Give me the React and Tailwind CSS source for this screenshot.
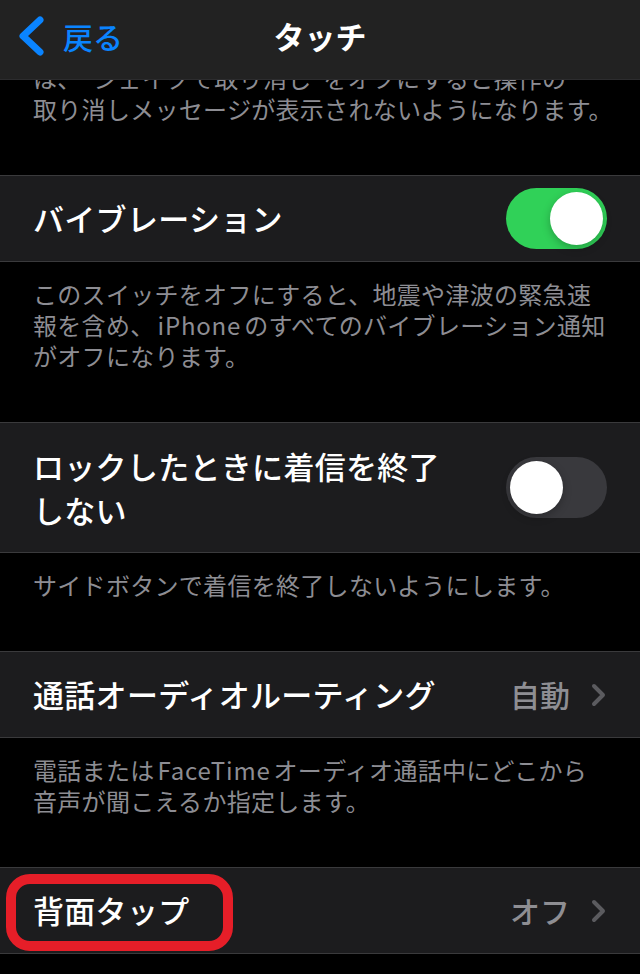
import React from 'react';

const font = { fontFamily: '"Noto Sans CJK JP", "Noto Sans", sans-serif' };

function Toggle({ on }) {
  return (
    <div
      className={`relative flex h-[61px] w-[101px] shrink-0 items-center rounded-full px-[4px] ${
        on ? 'justify-end bg-[#30d158]' : 'justify-start bg-[#39393d]'
      }`}
    >
      <div className="h-[53px] w-[53px] rounded-full bg-white shadow-[0_3px_8px_rgba(0,0,0,0.25)]" />
    </div>
  );
}

function Chevron() {
  return (
    <svg width="17" height="24" viewBox="0 0 17 24" className="shrink-0">
      <path d="M4 3 L13 12 L4 21" fill="none" stroke="#5b5b5f" strokeWidth="4" strokeLinecap="round" strokeLinejoin="round" />
    </svg>
  );
}

function Latin({ children }) {
  return <span className="mx-[3px] tracking-[0.8px]">{children}</span>;
}

function Footer({ children, top }) {
  return (
    <div
      className={`whitespace-nowrap px-[33px] pb-[51px] text-[24px] leading-[31px] tracking-[0.3px] text-[#8d8d93] ${top ? 'pt-[62px]' : 'pt-[16px]'}`}
    >
      {children}
    </div>
  );
}

function Cell({ children, tall }) {
  return (
    <div
      className={`relative flex items-center justify-between border-y border-[#3a3a3c] bg-[#1c1c1e] pl-[33px] pr-[33px] ${
        tall ? 'h-[131px]' : 'h-[87px]'
      }`}
    >
      {children}
    </div>
  );
}

export default function App() {
  return (
    <div className="relative h-[974px] w-[640px] overflow-hidden bg-black" style={font}>
      <header className="absolute left-0 right-0 top-0 z-10 flex h-[80px] items-center justify-center border-b border-[#2c2c2e] bg-[#222222]">
        <div className="absolute left-[15px] top-[14px] flex items-center gap-[18px]">
          <svg width="30" height="44" viewBox="0 0 30 44">
            <path d="M25 6 L8 22 L25 38" fill="none" stroke="#0a84ff" strokeWidth="7" strokeLinecap="round" strokeLinejoin="round" />
          </svg>
          <span className="text-[30px] font-medium leading-none text-[#0a84ff]">戻る</span>
        </div>
        <h1 className="-mt-[6px] text-[31px] font-bold text-white">タッチ</h1>
      </header>

      <main className="flex flex-col">
        <Footer top>
          は、“シェイクで取り消し”をオフにすると操作の
          <br />
          取り消しメッセージが表示されないようになります。
        </Footer>

        <Cell>
          <span className="text-[31px] font-medium tracking-[0.3px] text-white">バイブレーション</span>
          <Toggle on />
        </Cell>
        <Footer>
          このスイッチをオフにすると、地震や津波の緊急速
          <br />
          報を含め、<Latin>iPhone</Latin>のすべてのバイブレーション通知
          <br />
          がオフになります。
        </Footer>

        <Cell tall>
          <span className="w-[430px] text-[31px] font-medium leading-[44px] tracking-[0.3px] text-white">
            ロックしたときに着信を終了しない
          </span>
          <Toggle on={false} />
        </Cell>
        <Footer>サイドボタンで着信を終了しないようにします。</Footer>

        <Cell>
          <span className="text-[31px] font-medium tracking-[0.3px] text-white">通話オーディオルーティング</span>
          <div className="flex items-center gap-[20px]">
            <span className="text-[30px] font-medium text-[#8e8e93]">自動</span>
            <Chevron />
          </div>
        </Cell>
        <Footer>
          電話または<Latin>FaceTime</Latin>オーディオ通話中にどこから
          <br />
          音声が聞こえるか指定します。
        </Footer>

        <Cell>
          <span className="text-[31px] font-medium tracking-[0.3px] text-white">背面タップ</span>
          <div className="flex items-center gap-[20px]">
            <span className="text-[30px] font-medium text-[#8e8e93]">オフ</span>
            <Chevron />
          </div>
          <div className="pointer-events-none absolute left-[6px] top-[6px] h-[77px] w-[227px] rounded-[24px] border-[10px] border-[#e61e28]" />
        </Cell>
      </main>
    </div>
  );
}
